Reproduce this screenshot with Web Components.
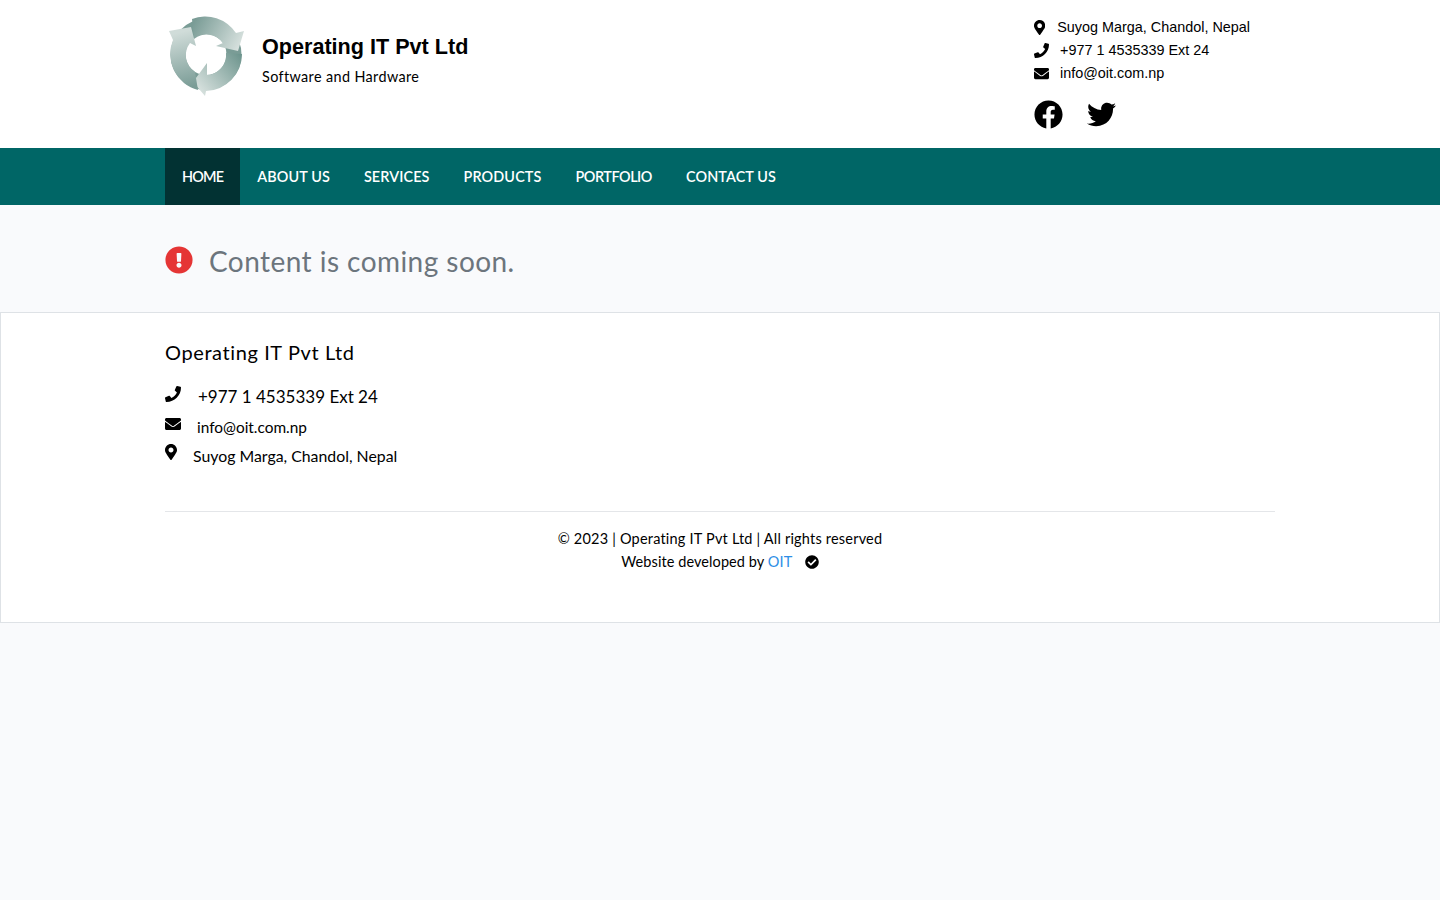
<!DOCTYPE html>
<html lang="en">
  <head>
    <meta charset="UTF-8" />
    <title>Operating IT Pvt Ltd</title>
    <style>
      body {
        margin: 0;
        background: #f9fafc;
        color: #000;
        font-family: Lato, "Noto Sans", sans-serif;
      }
    </style>
  </head>
  <body>
    <site-header></site-header>
    <site-nav>
      <a href="#" class="active" style="letter-spacing: -0.8px">HOME</a>
      <a href="#">ABOUT US</a>
      <a href="#">SERVICES</a>
      <a href="#">PRODUCTS</a>
      <a href="#" style="letter-spacing: -0.45px">PORTFOLIO</a>
      <a href="#">CONTACT US</a>
    </site-nav>
    <coming-soon>Content is coming soon.</coming-soon>
    <site-footer></site-footer>

    <script>
      // font awesome glyphs, [viewBox width, path]
      const ICONS = {
        marker: [384, 'M172.268 501.67C26.97 291.031 0 255.28 0 192 0 85.961 85.961 0 192 0s192 85.961 192 192c0 63.28-26.97 99.031-172.268 309.67-9.535 13.774-29.93 13.773-39.464 0zM192 272c44.183 0 80-35.817 80-80s-35.817-80-80-80-80 35.817-80 80 35.817 80 80 80z'],
        phone: [512, 'M493.4 24.6l-104-24c-11.3-2.6-22.9 3.3-27.5 13.9l-48 112c-4.2 9.8-1.4 21.3 6.9 28l60.6 49.6c-36 76.7-98.9 140.5-177.2 177.2l-49.6-60.6c-6.8-8.3-18.2-11.1-28-6.9l-112 48C3.9 366.5-2 378.1.6 389.4l24 104C27.1 504.2 36.7 512 48 512c256.1 0 464-207.5 464-464 0-11.2-7.7-20.9-18.6-23.4z'],
        envelope: [512, 'M502.3 190.8c3.9-3.1 9.7-.2 9.7 4.7V400c0 26.5-21.5 48-48 48H48c-26.5 0-48-21.5-48-48V195.6c0-5 5.7-7.8 9.7-4.7 22.4 17.4 52.1 39.5 154.1 113.6 21.1 15.4 56.7 47.8 92.2 47.6 35.7.3 72-32.8 92.3-47.6 102-74.1 131.6-96.3 154-113.7zM256 320c23.2.4 56.6-29.2 73.4-41.4 132.7-96.3 142.8-104.7 173.4-128.7 5.8-4.5 9.2-11.5 9.2-18.9v-19c0-26.5-21.5-48-48-48H48C21.5 64 0 85.5 0 112v19c0 7.4 3.4 14.3 9.2 18.9 30.6 23.9 40.7 32.4 173.4 128.7 16.8 12.2 50.2 41.8 73.4 41.4z'],
        alert: [512, 'M504 256c0 136.997-111.043 248-248 248S8 392.997 8 256C8 119.083 119.043 8 256 8s248 111.083 248 248zm-248 50c-25.405 0-46 20.595-46 46s20.595 46 46 46 46-20.595 46-46-20.595-46-46-46zm-43.673-165.346l7.418 136c.347 6.364 5.609 11.346 11.982 11.346h48.546c6.373 0 11.635-4.982 11.982-11.346l7.418-136c.375-6.874-5.098-12.654-11.982-12.654h-63.383c-6.884 0-12.356 5.78-11.981 12.654z'],
        check: [512, 'M504 256c0 136.967-111.033 248-248 248S8 392.967 8 256 119.033 8 256 8s248 111.033 248 248zM227.314 387.314l184-184c6.248-6.248 6.248-16.379 0-22.627l-22.627-22.627c-6.248-6.249-16.379-6.249-22.628 0L216 308.118l-70.059-70.059c-6.248-6.248-16.379-6.248-22.628 0l-22.627 22.627c-6.248 6.248-6.248 16.379 0 22.627l104 104c6.249 6.249 16.379 6.249 22.628.001z'],
        facebook: [512, 'M504 256C504 119 393 8 256 8S8 119 8 256c0 123.78 90.69 226.38 209.25 245V327.69h-63V256h63v-54.64c0-62.15 37-96.48 93.67-96.48 27.14 0 55.52 4.84 55.52 4.84v61h-31.28c-30.8 0-40.41 19.12-40.41 38.73V256h68.78l-11 71.69h-57.78V501C413.31 482.38 504 379.78 504 256z'],
        twitter: [512, 'M459.37 151.716c.325 4.548.325 9.097.325 13.645 0 138.72-105.583 298.558-298.558 298.558-59.452 0-114.68-17.219-161.137-47.106 8.447.974 16.568 1.299 25.34 1.299 49.055 0 94.213-16.568 130.274-44.832-46.132-.975-84.792-31.188-98.112-72.772 6.498.974 12.995 1.624 19.818 1.624 9.421 0 18.843-1.3 27.614-3.573-48.081-9.747-84.143-51.98-84.143-102.985v-1.299c13.969 7.797 30.214 12.67 47.431 13.319-28.264-18.843-46.781-51.005-46.781-87.391 0-19.492 5.197-37.36 14.294-52.954 51.655 63.675 129.3 105.258 216.365 109.807-1.624-7.797-2.599-15.918-2.599-24.04 0-57.828 46.782-104.934 104.934-104.934 30.213 0 57.502 12.67 76.67 33.137 23.715-4.548 46.456-13.32 66.599-25.34-7.798 24.366-24.366 44.833-46.132 57.827 21.117-2.273 41.584-8.122 60.426-16.243-14.292 20.791-32.161 39.308-52.628 54.253z']
      };

      // svg icon sized by the size attribute, 1em box like font awesome
      class FaIcon extends HTMLElement {
        connectedCallback() {
          const [w, d] = ICONS[this.getAttribute('name')];
          const size = this.getAttribute('size') || 16;
          const root = this.shadowRoot || this.attachShadow({ mode: 'open' });
          root.innerHTML = `
            <style>
              :host { display: inline-flex; flex: none; color: inherit; }
              svg { display: block; fill: currentColor; }
            </style>
            <svg width="${(size * w) / 512}" height="${size}" viewBox="0 0 ${w} 512"><path d="${d}" /></svg>`;
        }
      }

      const headerTemplate = document.createElement('template');
      headerTemplate.innerHTML = `
        <style>
          :host { display: block; background: #fff; height: 148px; }
          .wrap {
            width: 1110px;
            margin: 0 auto;
            display: flex;
            justify-content: space-between;
          }
          .brand { display: flex; align-items: flex-start; padding-top: 10px; }
          .logo { display: block; width: 85px; height: 90px; margin-right: 12px; }
          .names { padding-top: 23px; }
          .title {
            margin: 0;
            font: bold 21.6px/28px "Liberation Sans", Arial, sans-serif;
          }
          .tag { margin-top: 6px; font-size: 14.4px; line-height: 20px; letter-spacing: 0.38px; }
          .contact {
            width: 241px;
            padding-top: 16px;
            font: 14.4px/23px "Liberation Sans", Arial, sans-serif;
          }
          .line { display: flex; align-items: center; height: 23px; }
          .marker { margin-right: 12px; }
          .wide { margin-right: 11px; }
          .social { display: flex; gap: 23.7px; margin-top: 15px; padding-left: 0.3px; }
        </style>
        <div class="wrap">
          <div class="brand">
            <svg class="logo" viewBox="0 0 85 90" role="img" aria-label="Logo">
              <defs>
                <linearGradient id="a" gradientUnits="userSpaceOnUse" x1="28" y1="14" x2="74" y2="38">
                  <stop offset="0" stop-color="#7a9c96" /><stop offset="1" stop-color="#d7e1de" />
                </linearGradient>
                <linearGradient id="b" gradientUnits="userSpaceOnUse" x1="74" y1="42" x2="32" y2="78">
                  <stop offset="0" stop-color="#6d948d" /><stop offset="1" stop-color="#d7e1de" />
                </linearGradient>
                <linearGradient id="c" gradientUnits="userSpaceOnUse" x1="30" y1="76" x2="16" y2="22">
                  <stop offset="0" stop-color="#7a9c96" /><stop offset="1" stop-color="#d0dcd9" />
                </linearGradient>
              </defs>
              <circle cx="41" cy="44.5" r="28" fill="none" stroke="#7a9c96" stroke-width="15" />
              <path fill="url(#a)" d="M27 9A36.5 36.5 0 0 1 71 23L79 21L73 41L51 36L58 33A20 20 0 0 0 29 29Z" />
              <path fill="url(#b)" d="M77 44A37 37 0 0 1 41 81L40 86L28 72L42 53L42 65A20 20 0 0 0 61 43Z" />
              <path fill="url(#c)" d="M33 80A37 37 0 0 1 8 30L4 21L26 17L31 36L25 33A20 20 0 0 0 30 62Z" />
            </svg>
            <div class="names">
              <h1 class="title">Operating IT Pvt Ltd</h1>
              <div class="tag">Software and Hardware</div>
            </div>
          </div>
          <div class="contact">
            <div class="line"><fa-icon class="marker" name="marker" size="15"></fa-icon>Suyog Marga, Chandol, Nepal</div>
            <div class="line"><fa-icon class="wide" name="phone" size="15"></fa-icon>+977 1 4535339 Ext 24</div>
            <div class="line"><fa-icon class="wide" name="envelope" size="15"></fa-icon>info@oit.com.np</div>
            <div class="social">
              <fa-icon name="facebook" size="29"></fa-icon>
              <fa-icon name="twitter" size="29"></fa-icon>
            </div>
          </div>
        </div>`;

      class SiteHeader extends HTMLElement {
        constructor() {
          super();
          this.attachShadow({ mode: 'open' }).appendChild(headerTemplate.content.cloneNode(true));
        }
      }

      const navTemplate = document.createElement('template');
      navTemplate.innerHTML = `
        <style>
          :host { display: block; background: #006666; }
          .wrap { width: 1110px; margin: 0 auto; display: flex; }
          ::slotted(a) {
            display: block;
            padding: 0 17px;
            height: 57px;
            line-height: 57px;
            color: #fff;
            font-size: 14.4px;
            font-weight: 600;
            letter-spacing: 0.12px;
            text-decoration: none;
          }
          ::slotted(a.active) { background: #023233; }
        </style>
        <nav class="wrap"><slot></slot></nav>`;

      class SiteNav extends HTMLElement {
        constructor() {
          super();
          this.attachShadow({ mode: 'open' }).appendChild(navTemplate.content.cloneNode(true));
        }
      }

      const soonTemplate = document.createElement('template');
      soonTemplate.innerHTML = `
        <style>
          :host { display: block; height: 107px; }
          .wrap {
            width: 1110px;
            margin: 0 auto;
            padding-top: 37px;
            display: flex;
            align-items: center;
            gap: 16px;
            color: #6c757d;
            font-size: 28px;
            line-height: 38px;
            letter-spacing: 0.45px;
          }
          fa-icon { color: #e53535; margin-top: -3px; }
        </style>
        <div class="wrap"><fa-icon name="alert" size="28"></fa-icon><span><slot></slot></span></div>`;

      class ComingSoon extends HTMLElement {
        constructor() {
          super();
          this.attachShadow({ mode: 'open' }).appendChild(soonTemplate.content.cloneNode(true));
        }
      }

      const footerTemplate = document.createElement('template');
      footerTemplate.innerHTML = `
        <style>
          :host {
            display: block;
            height: 311px;
            box-sizing: border-box;
            background: #fff;
            border: 1px solid #dee2e6;
          }
          .wrap { width: 1110px; margin: 0 auto; padding-top: 25px; }
          h5 { margin: 0 0 19px; font-size: 20px; font-weight: 400; line-height: 28px; letter-spacing: 0.6px; }
          .row { display: flex; align-items: flex-start; font-size: 16px; line-height: 24px; }
          .row fa-icon { margin-top: 1px; }
          .phone { font-size: 17px; height: 30px; gap: 17px; }
          .mail { height: 29px; gap: 16px; font-size: 15.4px; }
          .addr { gap: 16px; font-size: 15.85px; }
          .addr fa-icon { margin-top: 0; }
          hr { margin: 43px 0 15px; border: 0; border-top: 1px solid #e4e6e9; }
          .copy { text-align: center; font-size: 14.5px; line-height: 23px; letter-spacing: 0.2px; }
          .copy .by { letter-spacing: 0.08px; }
          .copy a { color: #2d8ee6; text-decoration: none; }
          .copy fa-icon { vertical-align: -2px; margin-left: 9px; }
        </style>
        <div class="wrap">
          <h5>Operating IT Pvt Ltd</h5>
          <div class="row phone"><fa-icon name="phone" size="16"></fa-icon>+977 1 4535339 Ext 24</div>
          <div class="row mail"><fa-icon name="envelope" size="16"></fa-icon>info@oit.com.np</div>
          <div class="row addr"><fa-icon name="marker" size="16"></fa-icon>Suyog Marga, Chandol, Nepal</div>
          <hr />
          <div class="copy">
            © 2023 | Operating IT Pvt Ltd | All rights reserved<br />
            <span class="by">Website developed by <a href="#">OIT</a> <fa-icon name="check" size="14"></fa-icon></span>
          </div>
        </div>`;

      class SiteFooter extends HTMLElement {
        constructor() {
          super();
          this.attachShadow({ mode: 'open' }).appendChild(footerTemplate.content.cloneNode(true));
        }
      }

      // register custom elements
      customElements.define('fa-icon', FaIcon);
      customElements.define('site-header', SiteHeader);
      customElements.define('site-nav', SiteNav);
      customElements.define('coming-soon', ComingSoon);
      customElements.define('site-footer', SiteFooter);
    </script>
  </body>
</html>
